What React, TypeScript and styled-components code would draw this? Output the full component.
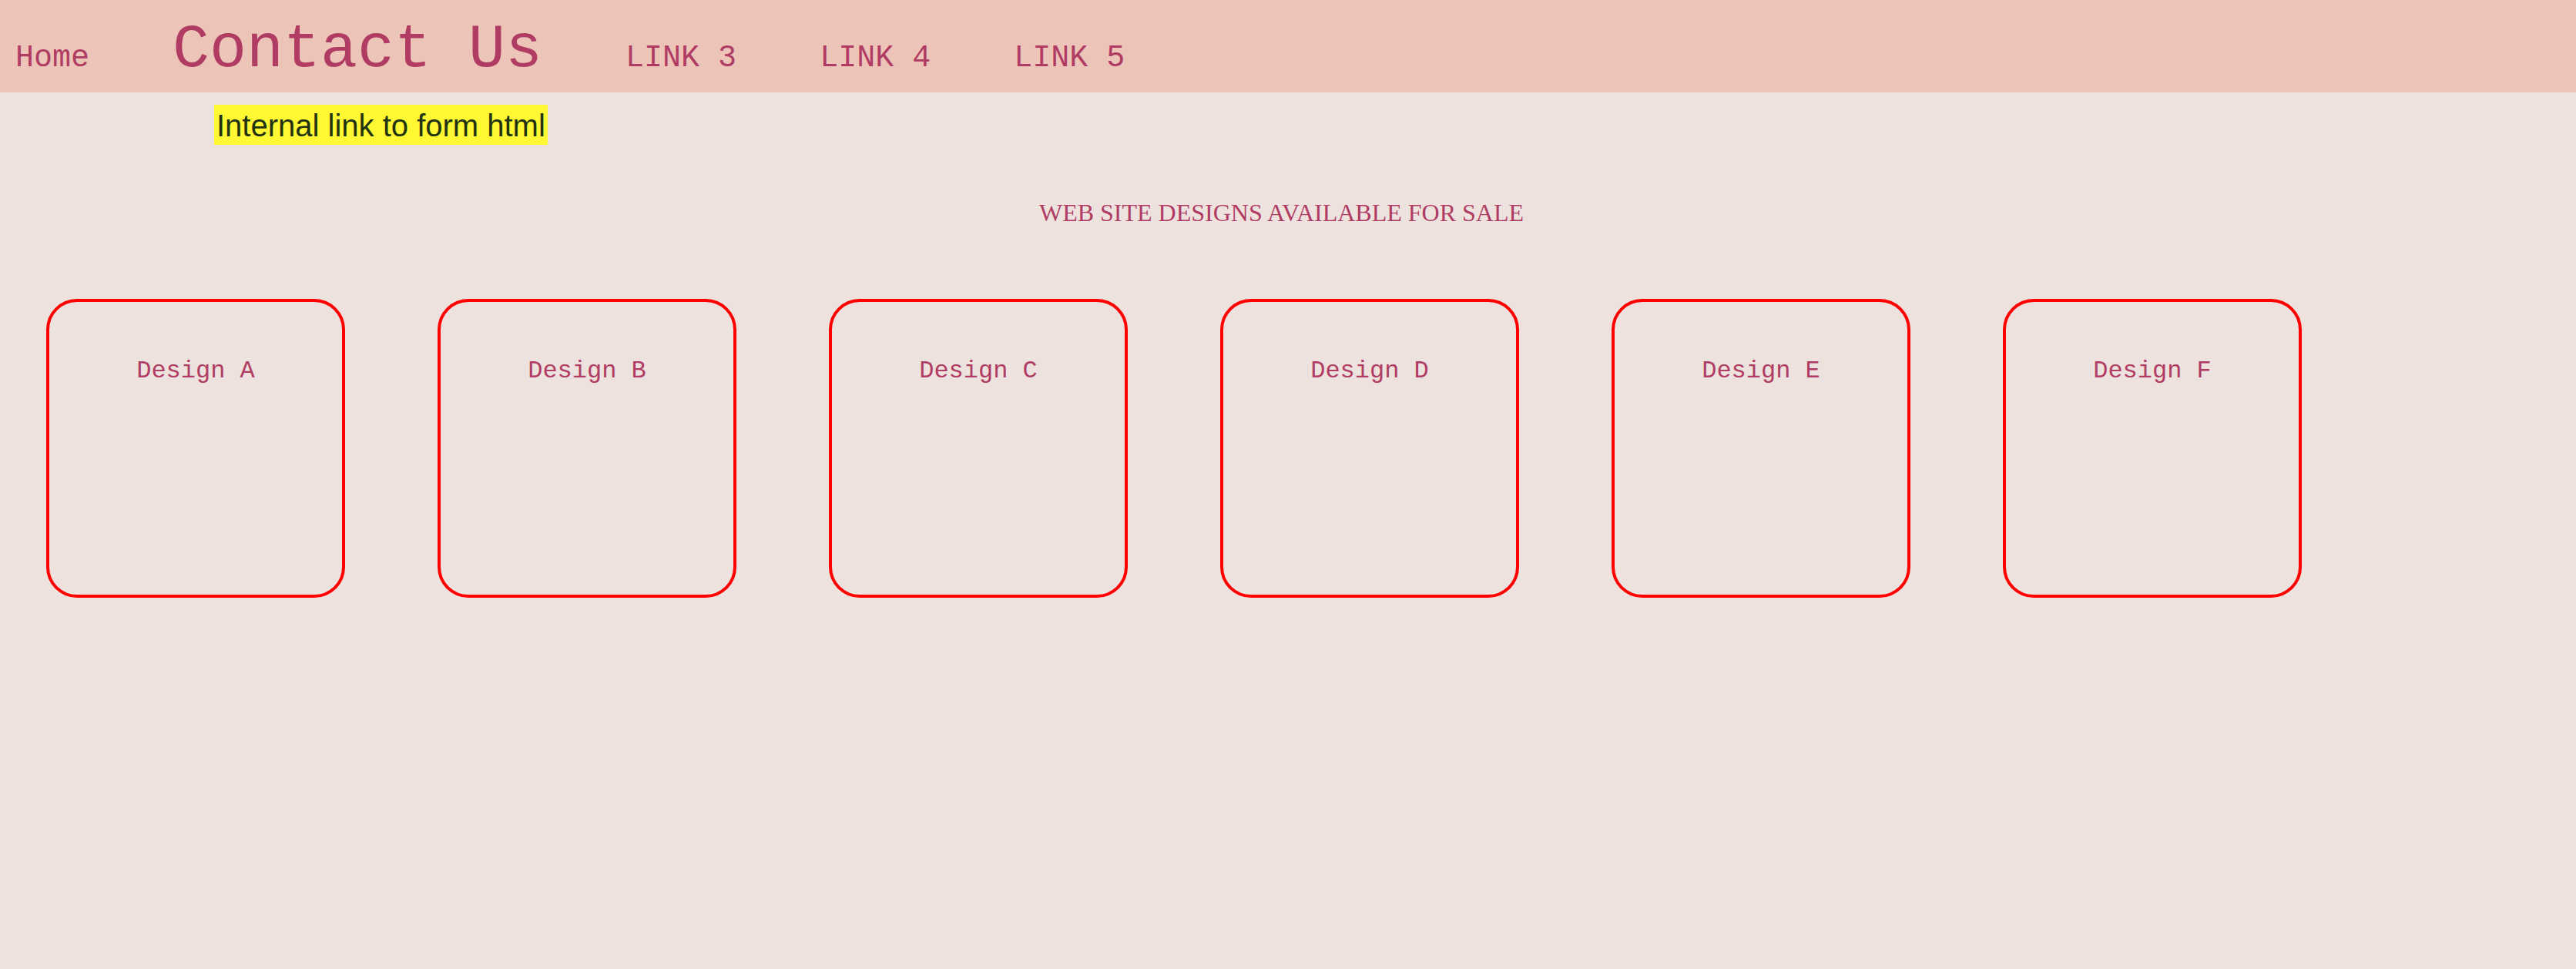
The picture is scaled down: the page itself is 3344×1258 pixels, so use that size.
import React from "react";
import styled, { createGlobalStyle } from "styled-components";

const GlobalStyle = createGlobalStyle`
  html, body {
    margin: 0;
    padding: 0;
    background: #ede2dd;
  }
  body {
    font-family: "Liberation Mono", "Courier New", monospace;
  }
`;

const Page = styled.div`
  min-height: 1258px;
  background: #ede2dd;
`;

const NavBar = styled.nav`
  height: 120px;
  box-sizing: border-box;
  background: #edc5b8;
  display: flex;
  align-items: baseline;
  gap: 108px;
  padding: 19px 0 0 20px;
`;

const NavLink = styled.a<{ $big?: boolean }>`
  font-family: "Liberation Mono", "Courier New", monospace;
  font-size: ${(p) => (p.$big ? "80px" : "40px")};
  line-height: normal;
  color: #b03c64;
  text-decoration: none;
  white-space: nowrap;
`;

const InternalRow = styled.div`
  margin: 16px 0 0 278px;
`;

const InternalLink = styled.a`
  display: inline-block;
  font-family: "Liberation Sans", Arial, sans-serif;
  font-size: 40px;
  line-height: 44px;
  padding: 5px 3px 3px 3px;
  background: #fff833;
  color: #223311;
  text-decoration: none;
`;

const Heading = styled.h2`
  margin: 70px 0 0 0;
  padding-right: 17px;
  font-family: "Liberation Serif", "Times New Roman", serif;
  font-size: 32px;
  font-weight: normal;
  line-height: normal;
  text-align: center;
  color: #b03c64;
`;

const DesignRow = styled.div`
  display: flex;
  gap: 120px;
  padding-left: 60px;
  margin-top: 93px;
`;

const DesignCard = styled.div`
  width: 388px;
  height: 388px;
  box-sizing: border-box;
  border: 4px solid #ff0000;
  border-radius: 40px;
  padding-top: 71px;
  text-align: center;
  font-family: "Liberation Mono", "Courier New", monospace;
  font-size: 32px;
  line-height: normal;
  color: #b03c64;
`;

const designs = ["A", "B", "C", "D", "E", "F"];

export default function App() {
  return (
    <Page>
      <GlobalStyle />
      <NavBar>
        <NavLink href="#">Home</NavLink>
        <NavLink href="#" $big>
          Contact Us
        </NavLink>
        <NavLink href="#">LINK 3</NavLink>
        <NavLink href="#">LINK 4</NavLink>
        <NavLink href="#">LINK 5</NavLink>
      </NavBar>
      <InternalRow>
        <InternalLink href="#">Internal link to form html</InternalLink>
      </InternalRow>
      <Heading>WEB SITE DESIGNS AVAILABLE FOR SALE</Heading>
      <DesignRow>
        {designs.map((d) => (
          <DesignCard key={d}>Design {d}</DesignCard>
        ))}
      </DesignRow>
    </Page>
  );
}
